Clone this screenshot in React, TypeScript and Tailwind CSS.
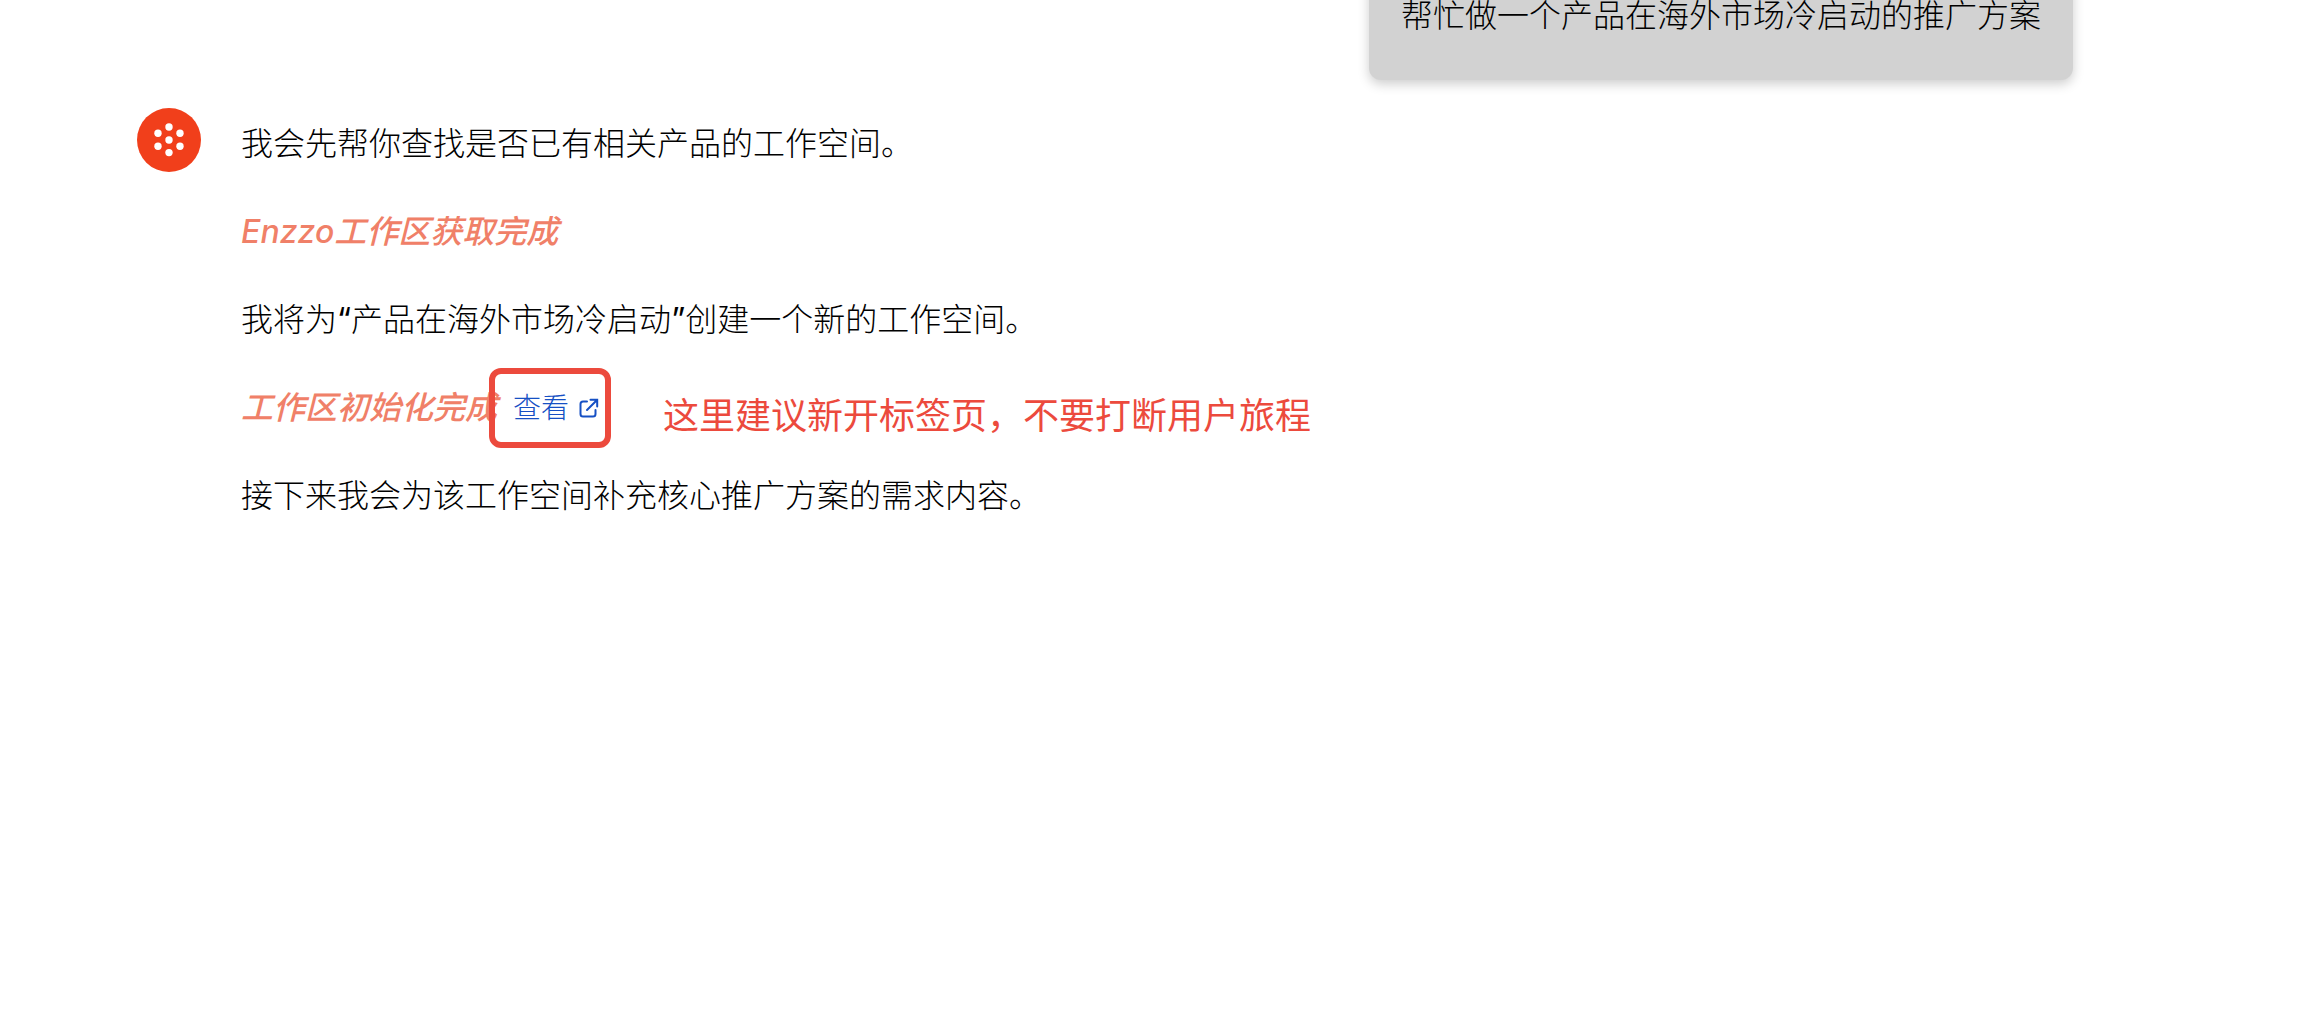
import type { ReactNode } from "react";

function Avatar() {
  return (
    <svg viewBox="0 0 64 64" className="size-16 shrink-0" role="img" aria-label="Enzzo">
      <circle cx="32" cy="32" r="32" fill="#f13f1b" />
      <g fill="#fff">
        <circle cx="32" cy="19" r="3.7" />
        <circle cx="21" cy="25.3" r="3.7" />
        <circle cx="43" cy="25.3" r="3.7" />
        <circle cx="32" cy="32" r="3.7" />
        <circle cx="21" cy="38.3" r="3.7" />
        <circle cx="43" cy="38.3" r="3.7" />
        <circle cx="32" cy="44.6" r="3.7" />
      </g>
    </svg>
  );
}

function ExternalIcon() {
  return (
    <svg
      viewBox="0 0 20 20"
      className="size-5"
      fill="none"
      stroke="currentColor"
      strokeWidth="2"
      strokeLinecap="round"
      aria-hidden="true"
    >
      <path d="M8 3.5H4A2.5 2.5 0 0 0 1.5 6V16A2.5 2.5 0 0 0 4 18.5h10A2.5 2.5 0 0 0 16.5 16v-4" />
      <path d="M11.5 1.8h6.7V8.5M18 2 8 12" />
    </svg>
  );
}

function Status({ children }: { children: ReactNode }) {
  return <em className="font-medium text-[#f08068]">{children}</em>;
}

export default function App() {
  return (
    <main className="min-h-screen bg-white font-['Inter','Noto_Sans_CJK_SC',sans-serif] text-[32px] leading-12 font-light text-black">
      <div className="flex justify-end pr-[233px]">
        <p className="-mt-8 rounded-xl bg-[#d2d2d2] px-8 pt-6 pb-10 shadow-[0_4px_12px_rgba(0,0,0,0.2)]">
          帮忙做一个产品在海外市场冷启动的推广方案
        </p>
      </div>

      <div className="mt-7 flex items-start gap-10 pl-[137px]">
        <Avatar />

        <div className="flex flex-col gap-10 pt-3">
          <p>我会先帮你查找是否已有相关产品的工作空间。</p>
          <p>
            <Status>Enzzo工作区获取完成</Status>
          </p>
          <p>
            我将为<span className="font-normal">“</span>产品在海外市场冷启动
            <span className="font-normal">”</span>创建一个新的工作空间。
          </p>
          <div className="flex h-12 items-center">
            <Status>工作区初始化完成</Status>
            <a
              href="#workspace"
              target="_blank"
              className="relative ml-4 flex items-center gap-2.5 text-[28px] text-[#1650c4]"
            >
              查看
              <ExternalIcon />
              <span className="absolute -top-4 -right-3 -bottom-4 -left-6 rounded-xl border-6 border-[#ec4a3d]" />
            </a>
            <span className="ml-16 pt-4 text-[36px] font-normal text-[#ec4a3d]">
              这里建议新开标签页，不要打断用户旅程
            </span>
          </div>
          <p>接下来我会为该工作空间补充核心推广方案的需求内容。</p>
        </div>
      </div>
    </main>
  );
}
